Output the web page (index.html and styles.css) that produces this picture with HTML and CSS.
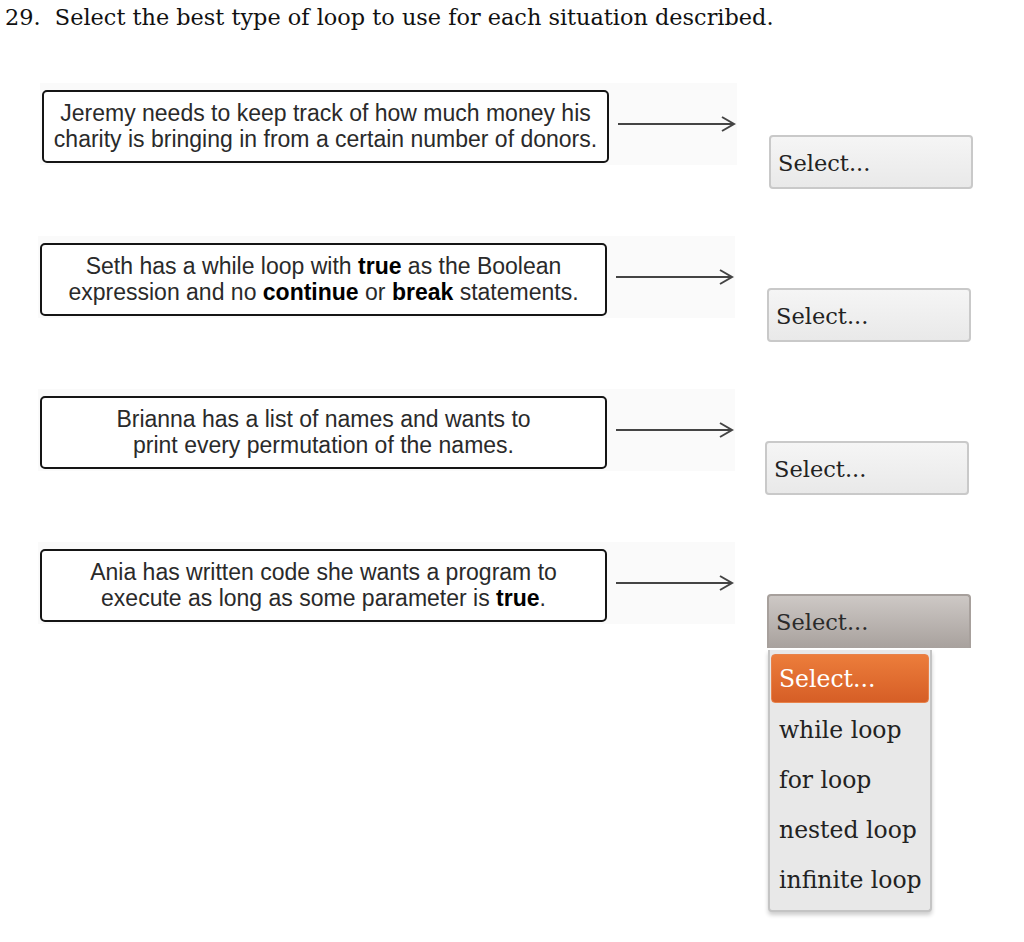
FILE: index.html
```html
<!DOCTYPE html>
<html lang="en">
<head>
  <meta charset="UTF-8">
  <title>Question 29</title>
  <link rel="stylesheet" href="styles.css">
</head>
<body>

  <h1 class="question">29.&nbsp; Select the best type of loop to use for each situation described.</h1>

  <div class="matching">

    <div class="pair pair-1">
      <div class="figure">
        <div class="prompt">Jeremy needs to keep track of how much money his<br>charity is bringing in from a certain number of donors.</div>
        <svg class="arrow" width="118" height="20" viewBox="0 0 118 20">
          <line x1="0" y1="10" x2="116" y2="10"/>
          <polyline points="104,3 116,10 104,17"/>
        </svg>
      </div>
      <div class="answer">
        <div class="select">Select...</div>
      </div>
    </div>

    <div class="pair pair-2">
      <div class="figure">
        <div class="prompt">Seth has a while loop with <b>true</b> as the Boolean<br>expression and no <b>continue</b> or <b>break</b> statements.</div>
        <svg class="arrow" width="118" height="20" viewBox="0 0 118 20">
          <line x1="0" y1="10" x2="116" y2="10"/>
          <polyline points="104,3 116,10 104,17"/>
        </svg>
      </div>
      <div class="answer">
        <div class="select">Select...</div>
      </div>
    </div>

    <div class="pair pair-3">
      <div class="figure">
        <div class="prompt">Brianna has a list of names and wants to<br>print every permutation of the names.</div>
        <svg class="arrow" width="118" height="20" viewBox="0 0 118 20">
          <line x1="0" y1="10" x2="116" y2="10"/>
          <polyline points="104,3 116,10 104,17"/>
        </svg>
      </div>
      <div class="answer">
        <div class="select">Select...</div>
      </div>
    </div>

    <div class="pair pair-4">
      <div class="figure">
        <div class="prompt">Ania has written code she wants a program to<br>execute as long as some parameter is <b>true</b>.</div>
        <svg class="arrow" width="118" height="20" viewBox="0 0 118 20">
          <line x1="0" y1="10" x2="116" y2="10"/>
          <polyline points="104,3 116,10 104,17"/>
        </svg>
      </div>
      <div class="answer">
        <div class="select open">Select...</div>
        <ul class="options">
          <li class="selected">Select...</li>
          <li>while loop</li>
          <li>for loop</li>
          <li>nested loop</li>
          <li>infinite loop</li>
        </ul>
      </div>
    </div>

  </div>

</body>
</html>
```

FILE: styles.css
```css
body {
  margin: 0;
  min-height: 942px;
  background: #fff;
  color: #222;
  font-family: "DejaVu Serif", Georgia, serif;
}

.question {
  margin: 0;
  padding: 3px 0 0 5px;
  font-size: 22.4px;
  font-weight: normal;
  line-height: 28px;
  color: #111;
}

.matching {
  padding-top: 52px;
}

.pair {
  display: flex;
  align-items: flex-start;
  margin-left: 38px;
  margin-bottom: 47px;
}

.pair-1 {
  margin-left: 40px;
}

.pair-3 .answer {
  margin-left: 30px;
}

.figure {
  display: flex;
  align-items: flex-start;
  width: 697px;
  height: 82px;
  padding: 7px 0 0 2px;
  box-sizing: border-box;
  background: #fafafa;
}

.prompt {
  width: 567px;
  height: 73px;
  box-sizing: border-box;
  padding-top: 8px;
  border: 2px solid #151515;
  border-radius: 5px;
  background: #fff;
  font-family: "Liberation Sans", Arial, sans-serif;
  font-size: 23px;
  line-height: 26px;
  color: #2a2a2a;
  text-align: center;
}

.prompt b {
  color: #000;
}

.arrow {
  margin: 24px 0 0 9px;
  fill: none;
  stroke: #444;
  stroke-width: 2;
}

.answer {
  position: relative;
  margin-left: 32px;
  padding-top: 52px;
}

.select {
  width: 204px;
  height: 54px;
  box-sizing: border-box;
  padding: 11px 0 0 7px;
  border: 2px solid #c9c9c9;
  border-radius: 4px;
  background: linear-gradient(#f5f5f5, #e9e9e9);
  font-size: 22.5px;
  line-height: 30px;
  color: #222;
}

.select.open {
  border-color: #a7a09c;
  border-bottom: none;
  border-radius: 4px 4px 0 0;
  background: linear-gradient(#cdc8c5, #a8a19d);
  color: #2a2a2a;
}

.options {
  position: absolute;
  top: 108px;
  left: 1px;
  width: 164px;
  margin: 0;
  padding: 4px 0 6px;
  box-sizing: border-box;
  list-style: none;
  background: #e8e8e8;
  border: 2px solid #c4c4c4;
  border-top: none;
  border-radius: 0 0 4px 4px;
  box-shadow: 0 3px 4px rgba(0, 0, 0, 0.2);
}

.options li {
  height: 50px;
  padding: 11px 0 0 9px;
  box-sizing: border-box;
  font-size: 23.5px;
  line-height: 30px;
  color: #222;
}

.options .selected {
  height: 49px;
  margin: 0 1px 1px;
  padding: 9px 0 0 7px;
  border: 1px solid #e8824a;
  border-radius: 4px;
  background: linear-gradient(#ec7d3b, #d65e26);
  color: #fff;
}
```
